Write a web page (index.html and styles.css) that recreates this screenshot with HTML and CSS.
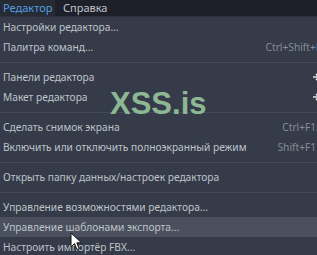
FILE: index.html
```html
<!DOCTYPE html>
<html>
<head>
<meta charset="utf-8">
<link rel="stylesheet" href="styles.css">
</head>
<body>
<div class="screen">
  <div class="menubar">
    <div class="tab tab-active">Редактор</div>
    <div class="tab">Справка</div>
  </div>
  <div class="menu">
    <div class="row"><span>Настройки редактора...</span></div>
    <div class="row"><span>Палитра команд...</span><span class="sc">Ctrl+Shift+P</span></div>
    <div class="sep"></div>
    <div class="row"><span>Панели редактора</span><svg class="arrow" width="8" height="8" viewBox="0 0 8 8"><path d="M1 4H7M4 1L7 4L4 7" stroke="#e6e8ec" stroke-width="1.6" fill="none"/></svg></div>
    <div class="row"><span>Макет редактора</span><svg class="arrow" width="8" height="8" viewBox="0 0 8 8"><path d="M1 4H7M4 1L7 4L4 7" stroke="#e6e8ec" stroke-width="1.6" fill="none"/></svg></div>
    <div class="sep"></div>
    <div class="row"><span>Сделать снимок экрана</span><span class="sc">Ctrl+F12</span></div>
    <div class="row"><span>Включить или отключить полноэкранный режим</span><span class="sc">Shift+F11</span></div>
    <div class="sep"></div>
    <div class="row"><span>Открыть папку данных/настроек редактора</span></div>
    <div class="sep"></div>
    <div class="row"><span>Управление возможностями редактора...</span></div>
    <div class="row row-hover"><span>Управление шаблонами экспорта...</span></div>
    <div class="row"><span>Настроить импортёр FBX...</span></div>
  </div>
  <div class="watermark">XSS.is</div>
  <svg class="cursor" width="13" height="19" viewBox="0 0 13 19"><path d="M1 1V15L4.5 11.5L7 17.5L9.2 16.6L6.8 10.8H11.5Z" fill="#ffffff" stroke="#111" stroke-width="1"/></svg>
</div>
</body>
</html>
```
FILE: styles.css
```css
html, body {
  margin: 0;
  padding: 0;
  overflow: hidden;
  background: #353b48;
}
.screen {
  position: relative;
  width: 317px;
  height: 255px;
  overflow: hidden;
  font-family: "Noto Sans", "Open Sans", sans-serif;
  font-size: 10.2px;
  color: #bfc3ca;
}
.menubar {
  display: flex;
  height: 16px;
  background: #1d2028;
  border-bottom: 1px solid #2c313b;
  font-size: 11px;
}
.tab {
  padding: 0 4px 0 3px;
  line-height: 16px;
  color: #c0c4cb;
}
.tab-active {
  background: #262a33;
  color: #559ee0;
  width: 48px;
  margin-right: 5px;
}
.menu {
  display: flex;
  flex-direction: column;
  width: 330px;
}
.row {
  height: 20px;
  display: flex;
  align-items: center;
  justify-content: space-between;
  padding: 0 8px 0 3px;
  white-space: nowrap;
}
.row-hover {
  background: #4a505d;
}
.sc {
  color: #878c96;
}
.arrow {
  margin-right: 2px;
}
.sep {
  height: 1px;
  background: #434956;
  margin: 5px 0 4px;
}
.watermark {
  position: absolute;
  left: 110px;
  top: 88px;
  font-family: "Liberation Sans", Arial, sans-serif;
  font-weight: bold;
  font-size: 31px;
  line-height: 31px;
  color: #8db893;
}
.cursor {
  position: absolute;
  left: 70px;
  top: 232px;
}
```
